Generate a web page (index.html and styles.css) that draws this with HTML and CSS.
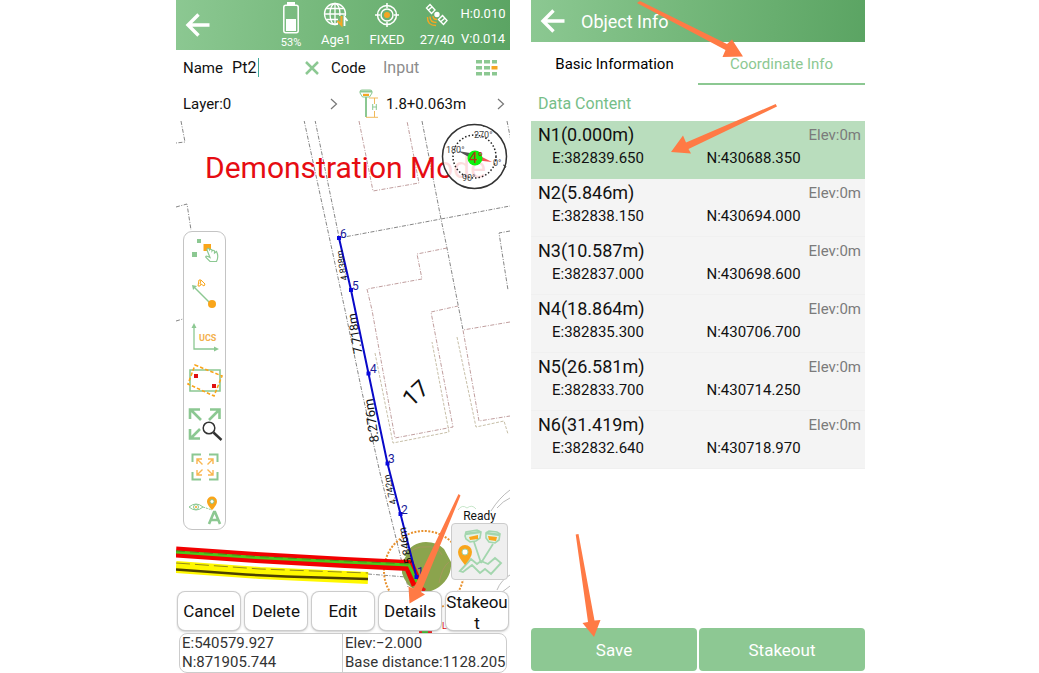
FILE: index.html
```html
<!DOCTYPE html>
<html lang="en">
<head>
<meta charset="utf-8">
<title>Survey - Object Info</title>
<link rel="stylesheet" href="styles.css">
</head>
<body>
<main class="screens">
  <section class="phone" aria-label="Map">
    <header class="status-bar">
      <button class="back" type="button" aria-label="Back"><svg width="26" height="26" viewBox="0 0 26 26"><path d="M24.500 13H3M13.500 2.500 3 13l10.500 10.500" fill="none" stroke="#fff" stroke-width="3.400"/></svg></button>
      <div class="status status-battery">
        <svg width="18" height="32" viewBox="0 0 18 32"><path d="M5 0h8v3H5z" fill="#fff"/><rect x="1.800" y="3.300" width="14.400" height="27.500" rx="2" fill="none" stroke="#fff" stroke-width="1.500"/><path d="M4 17h10v12H4z" fill="#fff"/></svg>
        <span class="percent">53%</span>
      </div>
      <div class="status">
        <svg width="26" height="26" viewBox="0 0 26 26" fill="none" stroke="#fff" stroke-width="1.300"><circle cx="12" cy="12" r="10.500"/><ellipse cx="12" cy="12" rx="5" ry="10.500"/><path d="M12 1.500v21M1.500 12h21M3.500 6.500h17M3.500 17.500h12"/><path d="M15 14h9v10h-9z" fill="#75b87b" stroke="none"/><path d="M18.500 14v9l-4-4" stroke="#f5a623" stroke-width="2"/><path d="M21.500 24v-9l3 4" stroke-width="1.800"/></svg>
        <span>Age1</span>
      </div>
      <div class="status">
        <svg width="26" height="26" viewBox="0 0 26 26" fill="none" stroke="#fff" stroke-width="1.500"><circle cx="13" cy="13" r="9.500"/><circle cx="13" cy="13" r="6"/><path d="M13 1v5M13 20v5M1 13h5M20 13h5"/><circle cx="13" cy="13" r="3" fill="#f5a623" stroke="none"/></svg>
        <span>FIXED</span>
      </div>
      <div class="status">
        <svg width="26" height="26" viewBox="0 0 26 26" fill="none" stroke="#fff" stroke-width="1.400"><path d="m6 2.500 5 5.500-3.500 3.500-5-5.500zM18.500 13.500l4.500 5-3.500 4-5-5zM4.500 8l4-3.500M16.500 20l4.500-4"/><circle cx="13" cy="12.500" r="2" fill="#fff"/><path d="M9 14q0 3.500 4 3.500M6 14.500q0 6 6.500 6M3.500 15q-.5 8.500 8.500 8.500" stroke="#f5a623"/></svg>
        <span>27/40</span>
      </div>
      <div class="accuracy"><span>H:0.010</span><span>V:0.014</span></div>
    </header>

    <form class="fields">
      <div class="field">
        <label for="name">Name</label>
        <span class="caret-box"><input id="name" class="name-input" type="text" value="Pt2" size="3"></span>
        <button class="icon-btn" type="button" aria-label="Clear name"><svg width="16" height="16" viewBox="0 0 16 16"><path d="m2 2 12 12M14 2 2 14" stroke="#8cc892" stroke-width="2.500"/></svg></button>
      </div>
      <div class="field">
        <label for="code">Code</label>
        <input id="code" class="code-input" type="text" placeholder="Input">
        <button class="icon-btn code-list" type="button" aria-label="Code list"><svg width="22" height="18" viewBox="0 0 22 18" fill="#8cc892"><path d="M0 1h6v3.500H0zM8 1h6v3.500H8zM16 1h5v3.500h-5zM0 7h6v3.500H0zM8 7h6v3.500H8zM0 13h6v3.500H0zM8 13h6v3.500H8zM16 13h5v3.500h-5z"/><path d="M15.500 7h6v3.500h-6z" fill="#f5a623"/></svg></button>
      </div>
      <button class="picker picker-layer" type="button"><span>Layer:0</span><svg width="8" height="12" viewBox="0 0 8 12"><path d="m1 1 5.500 5L1 11" fill="none" stroke="#777" stroke-width="1.200"/></svg></button>
      <button class="picker picker-antenna" type="button">
        <svg width="20" height="30" viewBox="0 0 20 30" fill="none"><path d="M1 4V2.500Q1 1 3 1h8q2 0 2 1.500V4L10.500 8h-7z" stroke="#8cc892"/><path d="M1 2.500h12" stroke="#8cc892" stroke-width="2"/><path d="M4 4.800h6V7H4z" fill="#f5a623"/><path d="M7 8v20" stroke="#8cc892" stroke-width="2"/><path d="M10 9h9M7 28.300h12M15.500 9v6M15.500 22v6" stroke="#f0b95a"/><path d="M13.700 15v6M17.300 15v6M13.700 18h4" stroke="#8cc892"/></svg>
        <span>1.8+0.063m</span><svg width="8" height="12" viewBox="0 0 8 12"><path d="m1 1 5.500 5L1 11" fill="none" stroke="#777" stroke-width="1.200"/></svg>
      </button>
    </form>

    <div class="map">
      <svg class="map-canvas" viewBox="176 121 334 552" preserveAspectRatio="xMidYMid slice">
        <g fill="none" stroke="#666" stroke-width=".8" stroke-dasharray="4 1.500 1 1.500">
          <path d="m181 121 4 21-9 1M176 207l11-3 4 26M176 321l7-2"/>
          <path d="m304 120 41 190 17 82 18 81 28 114M315 120l24 117M422 121l19 98 6 29 16 82"/>
          <path d="m339 238 102-19 69-13M510 231l-11 2 9 57M507 121l4 20M368 574l38 3"/>
        </g>
        <g fill="none" stroke="#b08585" stroke-width=".8" stroke-dasharray="4 1.500 1 1.500">
          <path d="m359 121 14 70 46-8-12-62"/>
          <path d="m447 248-30 6 5 25-55 10 5 21 23 128 58-11-22-115 27-6M510 322l-47 8 16 91 31-5"/>
        </g>
        <g fill="none" stroke="#b9ae92" stroke-width=".8" stroke-dasharray="3 1.500">
          <path d="m375 353 18 90 56-11-17-90M457 337l19 90 28-6 4 13"/>
        </g>
        <g fill="none" stroke="#aaa" stroke-width=".8"><path d="M491 511q8-13 19-21M497 508q6-7 13-10M497 590q4-10 13-15M497 596l13-10"/><path d="M458 510q4-6 9-2 5-4 9 1" stroke="#b9dfbc"/></g>

        <text class="watermark" x="205" y="178">Demonstration Mode</text>

        <circle cx="424" cy="571" r="40" fill="none" stroke="#e8912d" stroke-width="2" stroke-dasharray="2 1.500"/>
        <path d="M404 556q8-14 22-14 11 0 18 7l7 13q1 15-12 25-10 7-21 4-12-4-16-18-1-10 4-17z" fill="#8ba44d"/>
        <path d="M407 554q9-8 18-7 12-2 17 8M449 562q-7 5-10 21" fill="none" stroke="#a99660" stroke-width=".8"/>

        <path d="m176 552 80 5.500 89 5 64 3 8 19" fill="none" stroke="#f20000" stroke-width="11"/>
        <path d="m176 552 80 5.500 89 4.500 64 3 8 17" fill="none" stroke="#4cc91b" stroke-width="3"/>
        <path d="m176 551 80 5.500 89 4.500 64 3" fill="none" stroke="#45851a" stroke-width=".8" stroke-dasharray="9 5"/>
        <path d="m176 567 84 6 108 5" fill="none" stroke="#fff800" stroke-width="12"/>
        <path d="m176 569.500 70 5 40 2 82 2.500" fill="none" stroke="#4c4100" stroke-width="2.500"/>
        <path d="m176 563 84 6 108 4" fill="none" stroke="#77701c" stroke-width=".8" stroke-dasharray="14 5"/>

        <path d="m339 238 12 52 17.500 83.500 19 90 13 50.500 16 63" fill="none" stroke="#0808c8" stroke-width="2"/>
        <path d="M337 236h4v4h-4zM349 288h4v4h-4zM366.500 371.500h4v4h-4zM385.500 461.500h4v4h-4zM398.500 512h4v4h-4zM414.500 575h4v4h-4z" fill="#0808e0"/>
        <g class="vertex">
          <text x="340" y="238">6</text><text x="352" y="290">5</text><text x="370" y="373">4</text><text x="388" y="463">3</text><text x="401" y="514">2</text><text x="417" y="576">1</text>
        </g>
        <g class="length">
          <text class="len-s" transform="translate(345 265) rotate(-99)">4.838m</text>
          <text class="len-m" transform="translate(359 333) rotate(-99)">7.718m</text>
          <text class="len-l" transform="translate(376 420) rotate(-98)">8.276m</text>
          <text class="len-s" transform="translate(393 489) rotate(-103)">4.742m</text>
          <text class="len-n" transform="translate(409 545) rotate(-100)">5.846m</text>
          <text class="plot" transform="translate(421 399) rotate(-43)">17</text>
        </g>
        <path d="M420 585l6 4-3 5z" fill="#e11"/>
        <path d="M419 632h13" stroke="#e11" stroke-width="4"/><path d="M422 632h6" stroke="#3b2" stroke-width="2"/>
        <text class="mark" x="442" y="629">L</text>

        <circle cx="474.500" cy="156.500" r="32" fill="#fff" fill-opacity=".86" stroke="#333" stroke-width="1.500"/>
        <circle cx="474.500" cy="156.500" r="21.500" fill="none" stroke="#222" stroke-width="1.500" stroke-dasharray="1.500 2"/>
        <path d="m458 151 18 3-2 6z" fill="#555"/><path d="m492 162-16-8-2 6z" fill="#f25555"/>
        <circle cx="475" cy="158" r="7.500" fill="#0cf20c"/>
        <g class="degree"><text x="474" y="138">270°</text><text x="446" y="153">180°</text><text x="462" y="181">90°</text><text x="493" y="166">0°</text></g>
        <text class="bearing" x="469" y="163">4°</text>
        <path d="m484 127-1-2M503 165l3 1-1 2M465 186l-1 2" stroke="#444" fill="none"/>
      </svg>

      <nav class="tools" aria-label="Map tools">
        <button type="button" aria-label="Select point"><svg viewBox="0 0 34 34"><path d="M9 4h4v4H9zM4 17h5v5H4z" fill="#8cc892"/><path d="M15.500 9h7.500v7h-7.500z" fill="#f9a51a"/><path d="m19 15 3 7.500-2-1q-3-1-2 1l4 4h6.500q2.500-5 0-10l-2 1.500v-2q-1.500-1.500-2.500 0v-1q-1.500-1.500-2.500 0L21 13.500q-2-.5-2 1.500z" fill="#fff" stroke="#8cc892" stroke-width="1.200"/></svg></button>
        <button type="button" aria-label="Direction"><svg viewBox="0 0 34 34" fill="none"><path d="m7 10 16 16" stroke="#8cc892" stroke-width="1.500"/><path d="m4 7 5 1-4 4z" fill="#8cc892"/><circle cx="24" cy="26" r="4" fill="#f9a51a"/><path d="m10 8 1-6h2l4 4-1 2-3-2-1 2zM13 2l-1 4" stroke="#f9a51a"/></svg></button>
        <button type="button" aria-label="UCS"><svg viewBox="0 0 34 34"><path d="M6 5v23h22" fill="none" stroke="#8cc892" stroke-width="1.300"/><path d="m6 2 2.500 5h-5zM31 28l-5 2.500v-5z" fill="#8cc892"/><text class="ucs" x="11" y="20">UCS</text></svg></button>
        <button type="button" aria-label="Box select"><svg viewBox="0 0 34 34" fill="none"><path d="M2 6h30v21H2z" stroke="#8cc892" stroke-width="1.600"/><path d="M7 1 34 12 26 32 0 20z" stroke="#f9a51a" stroke-width="1.600" stroke-dasharray="3.500 2"/><path d="M6 10h4v4H6zM24 20h4v4h-4z" fill="#e01010"/></svg></button>
        <button type="button" aria-label="Zoom"><svg viewBox="0 0 34 34" fill="none"><path d="m3 3 10 10M31 3 21 13M3 31l9-9M2 12V2.500h10M22 2.500h9.500V12M2 22v9.500h10" stroke="#8cc892" stroke-width="2.600"/><circle cx="21" cy="21" r="5.800" stroke="#333" stroke-width="1.500" fill="#fff"/><path d="m25.500 25.500 8 7.500" stroke="#333" stroke-width="2.400"/></svg></button>
        <button type="button" aria-label="Fit all"><svg viewBox="0 0 34 34" fill="none"><path d="M4.500 12V4.500H13M21 4.500h8.500V12M29.500 22v7.500H21M13 29.500H4.500V22" stroke="#8cc892" stroke-width="2"/><path d="m9 9 5.500 5.500M25 9l-5.500 5.500M9 25l5.500-5.500M25 25l-5.500-5.500M9 14V9h5M20 9h5v5M25 20v5h-5M14 25H9v-5" stroke="#f9b650" stroke-width="1.400"/></svg></button>
        <button type="button" aria-label="Show labels"><svg viewBox="0 0 34 34" fill="none"><path d="M1 14q7-6 14 0-7 6-14 0z" stroke="#8cc892"/><circle cx="8" cy="14" r="2.500" stroke="#8cc892"/><circle cx="8" cy="14" r="1" fill="#f9a51a"/><path d="m15 14 9 3" stroke="#8cc892" stroke-dasharray="2 1"/><path d="M24 17q-5-5-5-8.500a5 5 0 0 1 10 0q0 3.500-5 8.500z" fill="#f9a51a"/><circle cx="24" cy="8.500" r="2" fill="#fff" stroke="#8cc892"/><path d="m21 31 5-12h1l5 12M22.500 27h8" stroke="#8cc892" stroke-width="2.600"/></svg></button>
      </nav>

      <div class="ready">
        <span>Ready</span>
        <button type="button" aria-label="Measure"><svg width="48" height="48" viewBox="0 0 48 48" fill="none" stroke="#a3d6ae"><path d="m9 8 1-4 11-2 4 2-1 6-4 3-6 1-4-3zM30 5l3-2 8 1 3 2-1 6-4 3-6-1-3-4z" stroke-width="1.600" fill="#e4f2e6"/><path d="m9 6 15-2M30 5l14 2" stroke-width="2.400"/><path d="m13 9 9-2v4l-8 1zM32 8l9 1-1 4-7-1z" fill="#f9a51a" stroke="none"/><path d="m18 14 7 21M37 16 25 35" stroke-width="1.800"/><path d="m4 43 11-12 6 5 4-3 7 3 7-6 6 5-10 11-6-5-5 4-8-8-9 7z" stroke-width="1.900"/><path d="M9 37q-7-8-7-13a7 7 0 0 1 14 0q0 5-7 13z" fill="#f9a51a" stroke="none"/><circle cx="9" cy="24" r="3" fill="#fff"/></svg></button>
      </div>

      <div class="dock">
        <div class="actions">
          <button type="button">Cancel</button><button type="button">Delete</button><button type="button">Edit</button><button type="button">Details</button><button type="button">Stakeout</button>
        </div>
        <div class="readout">
          <div><span>E:540579.927</span><span>N:871905.744</span></div>
          <div><span>Elev:−2.000</span><span>Base distance:1128.205</span></div>
        </div>
      </div>
    </div>
    <svg class="pointers" viewBox="176 0 334 673"><path d="m458.500 494 2 1.500L421 592l4 2.500-15.500 9-1-17 5 2z"/></svg>
  </section>

  <section class="phone" aria-label="Object Info">
    <header class="title-bar">
      <button class="back" type="button" aria-label="Back"><svg width="26" height="26" viewBox="0 0 26 26"><path d="M24.500 13H3M13.500 2.500 3 13l10.500 10.500" fill="none" stroke="#fff" stroke-width="3.400"/></svg></button>
      <h1>Object Info</h1>
    </header>
    <div class="tabs" role="tablist">
      <button type="button" role="tab" aria-selected="false">Basic Information</button>
      <button type="button" role="tab" aria-selected="true">Coordinate Info</button>
    </div>
    <h2>Data Content</h2>
    <ul class="nodes">
      <li class="selected"><strong>N1(0.000m)</strong><em>Elev:0m</em><span>E:382839.650</span><span>N:430688.350</span></li>
      <li><strong>N2(5.846m)</strong><em>Elev:0m</em><span>E:382838.150</span><span>N:430694.000</span></li>
      <li><strong>N3(10.587m)</strong><em>Elev:0m</em><span>E:382837.000</span><span>N:430698.600</span></li>
      <li><strong>N4(18.864m)</strong><em>Elev:0m</em><span>E:382835.300</span><span>N:430706.700</span></li>
      <li><strong>N5(26.581m)</strong><em>Elev:0m</em><span>E:382833.700</span><span>N:430714.250</span></li>
      <li><strong>N6(31.419m)</strong><em>Elev:0m</em><span>E:382832.640</span><span>N:430718.970</span></li>
    </ul>
    <footer class="footer"><button type="button">Save</button><button type="button">Stakeout</button></footer>
    <svg class="pointers" viewBox="531 0 334 673"><path d="m637 3 3-2 87 43 5-4.500 11 17-20.500.500 3-7z"/><path d="m775.700 104 1.300 2.500-88.500 42.500 2.500 4.500-20-1.500 12-16.500 3 7z"/><path d="m575.700 534.500 2.800-.5 16 86.500 6-.5-6.500 17-11.500-14 5.500-1z"/></svg>
  </section>
</main>
</body>
</html>
```
FILE: styles.css
```css
* { box-sizing: border-box; }

body {
  margin: 0;
  background: #fff;
  color: #111;
  font-family: Roboto, "Noto Sans", sans-serif;
  font-size: 15px;
}

button, input { font: inherit; color: inherit; }
button { border: 0; padding: 0; background: none; }
svg { display: block; }

.screens {
  display: grid;
  grid-template-columns: repeat(2, minmax(0, 334px));
  justify-content: center;
  gap: 21px;
  padding-left: 2px;
}

.phone {
  position: relative;
  display: flex;
  flex-direction: column;
  min-height: 100vh;
}

.status-bar, .title-bar {
  display: grid;
  align-items: center;
  padding: 0 4px 0 9px;
  background: linear-gradient(95deg, #8cc892, #75b87b 45%, #5ba463);
  color: #fff;
}

/* Map screen */
.status-bar {
  grid-template-columns: 1fr 42px 48px 54px 46px 46px;
  height: 50px;
  font-size: 13px;
}

.status {
  display: flex;
  flex-direction: column;
  align-items: center;
  gap: 4px;
  line-height: 16px;
}

.status-battery { gap: 3px; }
.percent { font-size: 11px; line-height: 12px; }

.accuracy {
  display: flex;
  flex-direction: column;
  align-items: center;
  gap: 9px;
  padding-top: 2px;
  line-height: 16px;
}

.fields {
  display: grid;
  grid-template-columns: 148px minmax(0, 1fr);
  row-gap: 1px;
  padding: 0 5px 0 7px;
}

.field { display: flex; align-items: center; height: 35px; }
.field label { flex: 0 0 49px; }
.field input { border: 0; padding: 0; outline: 0; background: none; font-size: 16px; }
.caret-box { flex: 1; min-width: 0; }
.name-input { width: 27px; }
.caret-box .name-input { border-right: 1px solid #3fa99a; }
.field .code-input { flex: 1; min-width: 0; margin-left: 3px; }
.code-input::placeholder { color: #8c8c8c; opacity: 1; }
.icon-btn { padding: 4px; }
.field:first-child .icon-btn { padding-right: 11px; }
.field .code-list { padding-right: 7px; }

.picker {
  display: flex;
  align-items: center;
  justify-content: space-between;
  height: 35px;
  text-align: left;
}

.picker-layer { width: 155px; }
.picker-antenna { gap: 7px; padding-left: 28px; }
.picker-antenna span { flex: 1; }

.map { position: relative; flex: 1; min-height: 552px; overflow: hidden; }
.map-canvas { position: absolute; inset: 0; width: 100%; height: 100%; }
.watermark { fill: #e60c12; font-size: 30px; }
.vertex { fill: #1a1a99; font-size: 12px; }
.length { fill: #111; text-anchor: middle; }
.len-s { font-size: 9px; }
.len-n { font-size: 11px; }
.len-m { font-size: 12px; }
.len-l { font-size: 13px; }
.plot { font-size: 23px; }
.mark { fill: #e01010; font-size: 9px; }
.degree { fill: #444; font-size: 9px; }
.bearing { fill: #b03818; font-size: 15px; }

.tools {
  position: absolute;
  left: 7px;
  top: 110px;
  display: flex;
  flex-direction: column;
  align-items: center;
  gap: 9px;
  width: 43px;
  padding: 3px 0 2px;
  border: 1px solid #c4c4c4;
  border-radius: 9px;
  background: #fff;
}

.tools svg { width: 34px; height: 34px; overflow: visible; }
.ucs { fill: #f3b04c; font-size: 9px; font-weight: 700; }

.ready {
  position: absolute;
  right: 2px;
  bottom: 93px;
  display: flex;
  flex-direction: column;
  align-items: center;
  font-size: 12px;
  line-height: 14px;
}

.ready button {
  display: grid;
  place-items: center;
  width: 57px;
  height: 57px;
  border: 1px solid #ccc;
  border-radius: 4px;
  background: #efefef;
}

.dock {
  position: absolute;
  inset: auto 0 0;
  display: grid;
  gap: 3px;
  padding: 0 2px;
}

.actions { display: grid; grid-template-columns: repeat(5, 1fr); gap: 5px; }

.actions button {
  height: 38px;
  border-radius: 7px;
  background: #fff;
  box-shadow: 0 0 0 1px #ccc, 0 1px 3px #999;
  font-size: 17px;
  line-height: 21px;
  overflow-wrap: anywhere;
}

.readout {
  display: grid;
  grid-template-columns: 162px 1fr;
  margin: 0 1px;
  border: 1px solid #ccc;
  border-radius: 8px;
  background: #fff;
  color: #333;
  font-size: 15px;
  line-height: 19px;
}

.readout div { display: grid; padding-left: 2px; white-space: nowrap; }
.readout div + div { border-left: 1px solid #ccc; }

/* Object info screen */
.title-bar { grid-template-columns: 41px 1fr; height: 42px; }
h1 { margin: 0; font-size: 18px; font-weight: 400; }

.tabs { display: grid; grid-template-columns: 1fr 1fr; }
.tabs button { height: 43px; padding-top: 2px; border-bottom: 2px solid transparent; color: #000; }
.tabs button[aria-selected="true"] { border-color: #8cc892; color: #8cc892; }

h2 {
  height: 36px;
  margin: 0;
  padding-left: 7px;
  color: #76be88;
  font-size: 16px;
  font-weight: 400;
  line-height: 38px;
}

.nodes { margin: 0; padding: 0; list-style: none; }

.nodes li {
  display: grid;
  grid-template-columns: 1fr 1fr;
  align-content: start;
  height: 58px;
  padding: 2px 4px 0 7px;
  border-bottom: 1px solid #f0f0f0;
  background: #f4f4f4;
  line-height: 24px;
}

.nodes .selected { border-color: #b9ddbd; background: #b9ddbd; }
.nodes strong { font-size: 18px; font-weight: 400; }
.nodes em { color: #7b7b7b; font-style: normal; text-align: right; }
.nodes span { padding-left: 14px; line-height: 23px; }
.nodes span:last-child { padding-left: 7px; }

.footer {
  display: grid;
  grid-template-columns: 1fr 1fr;
  gap: 2px;
  margin-top: auto;
  padding-bottom: 2px;
}

.footer button {
  height: 43px;
  border-radius: 4px;
  background: #8dc893;
  color: #fff;
  font-size: 17px;
}

.pointers {
  position: absolute;
  inset: 0;
  width: 100%;
  height: 100%;
  fill: #ff7a45;
  pointer-events: none;
}
```
